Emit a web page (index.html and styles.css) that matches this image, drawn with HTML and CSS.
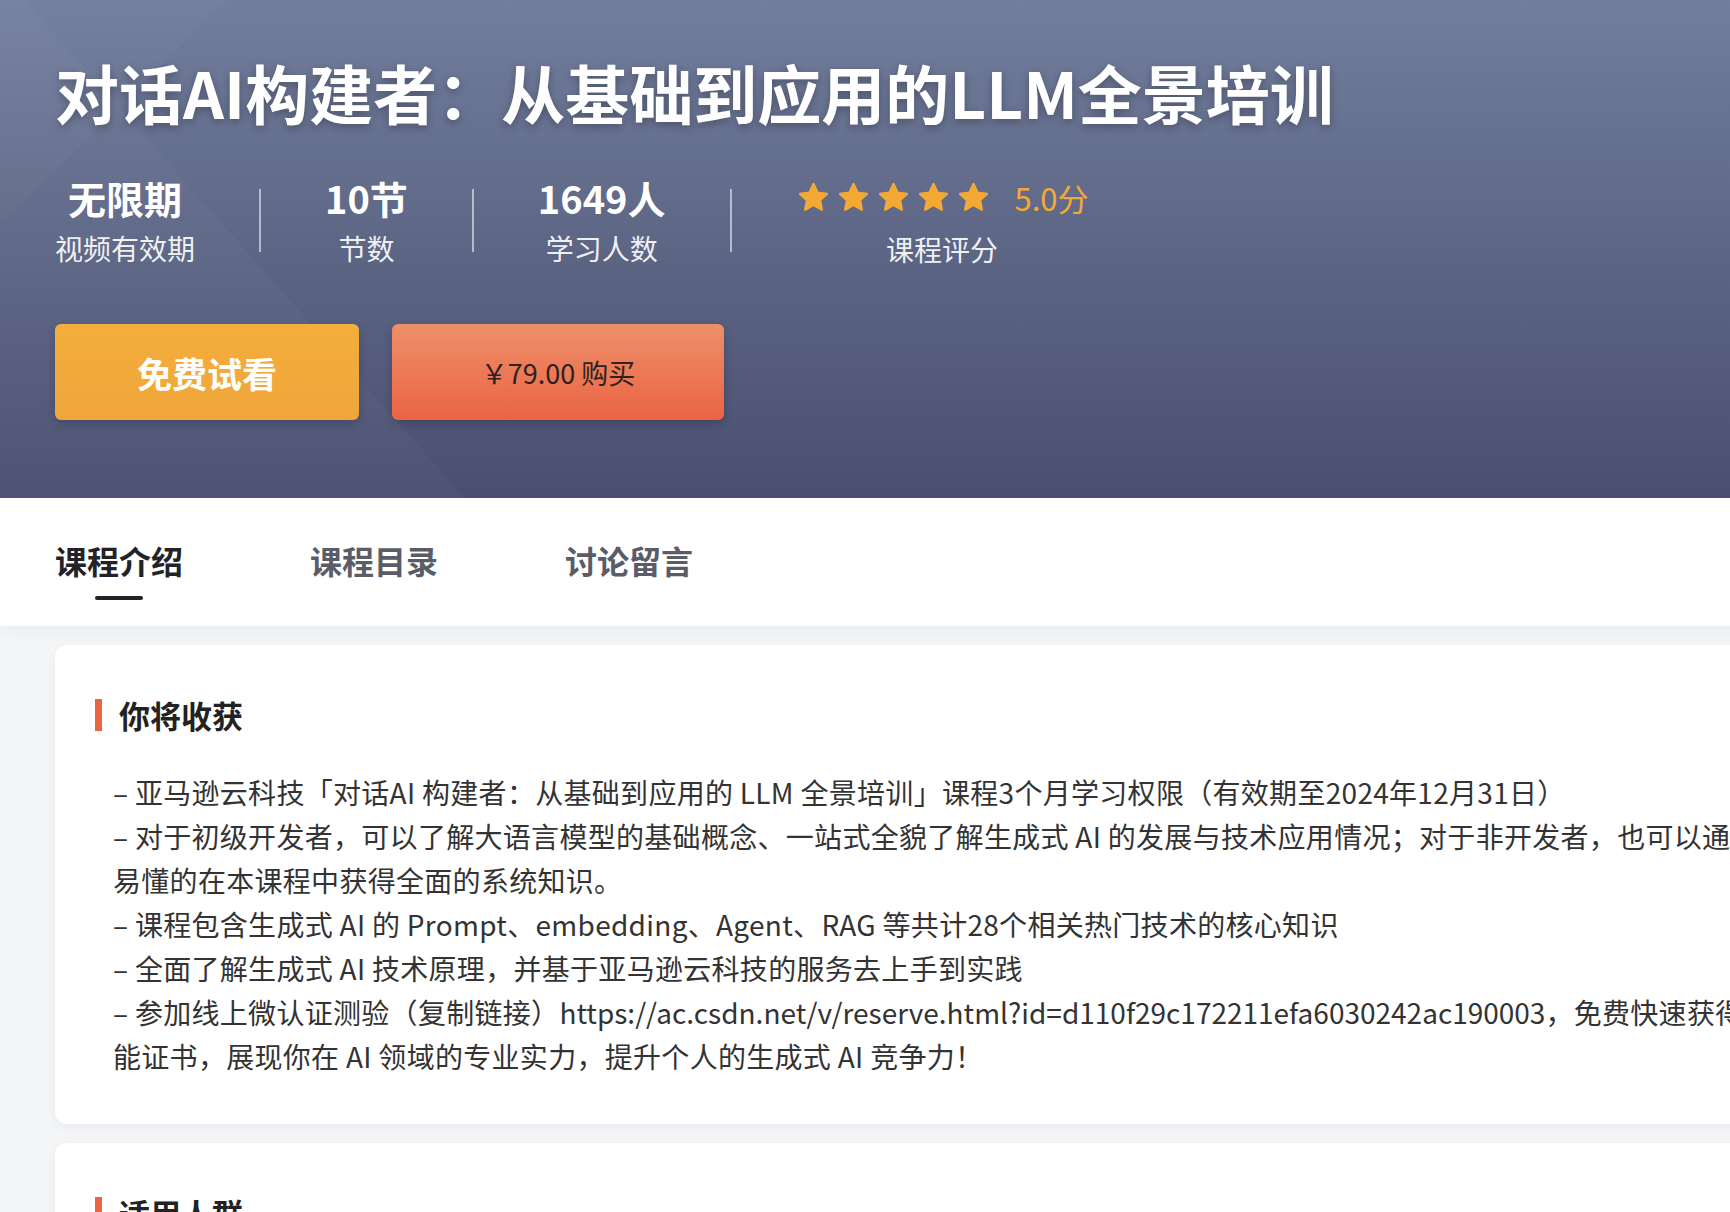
FILE: index.html
```html
<!DOCTYPE html>
<html lang="zh-CN">
<head>
<meta charset="utf-8">
<title>对话AI构建者：从基础到应用的LLM全景培训</title>
<link rel="stylesheet" href="styles.css">
</head>
<body>
<div class="page">
  <header class="hero">
    <h1 class="hero-title">对话AI构建者：从基础到应用的LLM全景培训</h1>
    <div class="stats">
      <div class="stat">
        <div class="stat-value">无限期</div>
        <div class="stat-label">视频有效期</div>
      </div>
      <div class="stat-divider"></div>
      <div class="stat">
        <div class="stat-value">10节</div>
        <div class="stat-label">节数</div>
      </div>
      <div class="stat-divider"></div>
      <div class="stat">
        <div class="stat-value">1649人</div>
        <div class="stat-label">学习人数</div>
      </div>
      <div class="stat-divider"></div>
      <div class="stat">
        <div class="rating">
          <div class="stars">
            <svg class="star" viewBox="0 0 24 24"><path d="M12 2.8l2.8 5.9 6.4.8-4.7 4.4 1.2 6.4L12 17.2l-5.7 3.1 1.2-6.4-4.7-4.4 6.4-.8z"/></svg>
            <svg class="star" viewBox="0 0 24 24"><path d="M12 2.8l2.8 5.9 6.4.8-4.7 4.4 1.2 6.4L12 17.2l-5.7 3.1 1.2-6.4-4.7-4.4 6.4-.8z"/></svg>
            <svg class="star" viewBox="0 0 24 24"><path d="M12 2.8l2.8 5.9 6.4.8-4.7 4.4 1.2 6.4L12 17.2l-5.7 3.1 1.2-6.4-4.7-4.4 6.4-.8z"/></svg>
            <svg class="star" viewBox="0 0 24 24"><path d="M12 2.8l2.8 5.9 6.4.8-4.7 4.4 1.2 6.4L12 17.2l-5.7 3.1 1.2-6.4-4.7-4.4 6.4-.8z"/></svg>
            <svg class="star" viewBox="0 0 24 24"><path d="M12 2.8l2.8 5.9 6.4.8-4.7 4.4 1.2 6.4L12 17.2l-5.7 3.1 1.2-6.4-4.7-4.4 6.4-.8z"/></svg>
          </div>
          <span class="score">5.0分</span>
        </div>
        <div class="stat-label">课程评分</div>
      </div>
    </div>
    <div class="actions">
      <button class="btn btn-trial">免费试看</button>
      <button class="btn btn-buy">￥79.00 购买</button>
    </div>
  </header>

  <nav class="tabs">
    <div class="tab active">课程介绍<span class="tab-line"></span></div>
    <div class="tab">课程目录</div>
    <div class="tab">讨论留言</div>
  </nav>

  <main class="content">
    <section class="card">
      <h2 class="card-title">你将收获</h2>
      <div class="card-body">
        <p>– 亚马逊云科技「对话AI 构建者：从基础到应用的 LLM 全景培训」课程3个月学习权限（有效期至2024年12月31日）</p>
        <p>– 对于初级开发者，可以了解大语言模型的基础概念、一站式全貌了解生成式 AI 的发展与技术应用情况；对于非开发者，也可以通俗易懂的在本课程中获得全面的系统知识。</p>
        <p>– 课程包含生成式 AI 的 Prompt、embedding、Agent、RAG 等共计28个相关热门技术的核心知识</p>
        <p>– 全面了解生成式 AI 技术原理，并基于亚马逊云科技的服务去上手到实践</p>
        <p>– 参加线上微认证测验（复制链接）<span class="link">https://ac.csdn.net/v/reserve.html?id=d110f29c172211efa6030242ac190003</span>，免费快速获得技能证书，展现你在 AI 领域的专业实力，提升个人的生成式 AI 竞争力！</p>
      </div>
    </section>
    <section class="card">
      <h2 class="card-title">适用人群</h2>
      <div class="card-body">
        <p>– 希望系统了解生成式 AI 与大语言模型技术的开发者与非开发者</p>
      </div>
    </section>
  </main>
</div>
</body>
</html>
```
FILE: styles.css
```css
html, body {
  margin: 0;
  padding: 0;
  overflow: hidden;
}
body {
  font-family: "Noto Sans CJK SC", "Noto Sans", sans-serif;
  background: #f4f5f7;
  color: #333;
}
.page {
  width: 1891px;
}
.hero {
  box-sizing: border-box;
  height: 498px;
  padding: 53px 55px 0;
  background:
    linear-gradient(48.5deg, rgba(255,255,255,0.025) 0, rgba(255,255,255,0.025) 348px, rgba(255,255,255,0) 348px),
    linear-gradient(135deg, rgba(255,255,255,0.02) 0, rgba(255,255,255,0.02) 160px, rgba(255,255,255,0) 160px),
    linear-gradient(180deg, #727e9d 0%, #5f6887 45%, #4a4f70 100%);
}
.hero-title {
  margin: 0;
  font-size: 64px;
  line-height: 76px;
  font-weight: 700;
  color: #fff;
  text-shadow: 0 3px 8px rgba(0,0,0,0.28);
}
.stats {
  display: flex;
  align-items: center;
  margin-top: 44px;
}
.stat {
  display: flex;
  flex-direction: column;
  align-items: center;
  padding: 0 64px;
}
.stat:first-child {
  padding-left: 0;
}
.stat-value {
  font-size: 38px;
  line-height: 48px;
  font-weight: 700;
  color: #fff;
}
.stat-label {
  margin-top: 8px;
  font-size: 28px;
  line-height: 36px;
  color: rgba(255,255,255,0.92);
}
.stat-divider {
  width: 2px;
  height: 63px;
  background: rgba(255,255,255,0.55);
}
.rating {
  display: flex;
  align-items: center;
  height: 48px;
}
.stars {
  display: flex;
  gap: 5px;
}
.star {
  width: 35px;
  height: 35px;
  fill: #f5a935;
  stroke: #f5a935;
  stroke-width: 1.6;
  stroke-linejoin: round;
}
.score {
  margin-left: 24px;
  font-size: 31px;
  color: #f5a935;
}
.rating + .stat-label {
  margin-top: 10px;
}
.actions {
  display: flex;
  gap: 33px;
  margin-top: 57px;
}
.btn {
  border: 0;
  border-radius: 6px;
  height: 96px;
  padding: 0;
  font-family: inherit;
  cursor: pointer;
  box-shadow: 0 4px 10px rgba(20,20,40,0.22);
}
.btn-trial {
  width: 304px;
  background: linear-gradient(180deg, #f3ae3c, #f0a63a);
  color: #fff;
  font-size: 35px;
  font-weight: 700;
}
.btn-buy {
  width: 332px;
  background: linear-gradient(180deg, #ef8f6a 0%, #ea6443 100%);
  color: #2e2220;
  font-size: 27px;
  font-weight: 400;
}
.tabs {
  display: flex;
  gap: 127px;
  height: 128px;
  box-sizing: border-box;
  padding: 41px 55px 0;
  background: #fff;
  box-shadow: 0 6px 14px rgba(30,40,70,0.04);
}
.tab {
  display: flex;
  flex-direction: column;
  align-items: center;
  font-size: 32px;
  line-height: 42px;
  font-weight: 700;
  color: #5a5d68;
}
.tab.active {
  color: #222227;
}
.tab-line {
  margin-top: 15px;
  width: 48px;
  height: 4px;
  border-radius: 2px;
  background: #222227;
}
.content {
  padding: 19px 55px 0;
  display: flex;
  flex-direction: column;
  gap: 19px;
}
.card {
  background: #fff;
  border-radius: 12px;
  padding: 54px 58px 46px 40px;
  box-shadow: 0 3px 10px rgba(30,40,70,0.05);
}
.card-title {
  margin: 0 0 39px;
  padding-left: 17px;
  border-left: 7px solid #ec6541;
  font-size: 31px;
  line-height: 32px;
  font-weight: 700;
  color: #222;
}
.card-body {
  padding-left: 18px;
}
.card-body p {
  margin: 0;
  font-size: 28px;
  line-height: 44px;
  letter-spacing: 0.3px;
  color: #333;
}
.card-body .link {
  letter-spacing: 0;
}
```
